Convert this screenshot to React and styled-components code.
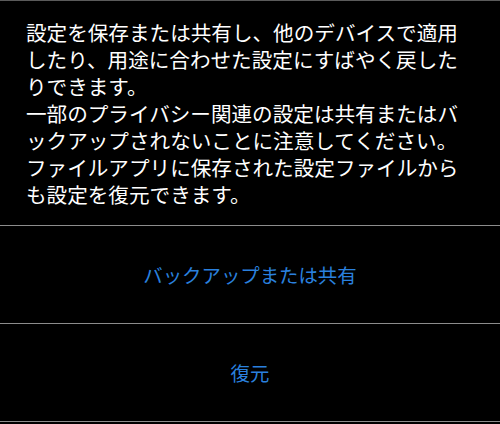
import React from 'react';
import styled, { createGlobalStyle } from 'styled-components';

const GlobalStyle = createGlobalStyle`
  html, body {
    margin: 0;
    padding: 0;
    background: #000;
  }
  body {
    font-family: "Noto Sans CJK JP", "Noto Sans", sans-serif;
  }
`;

const lines = [
  '設定を保存または共有し、他のデバイスで適用',
  'したり、用途に合わせた設定にすばやく戻した',
  'りできます。',
  '一部のプライバシー関連の設定は共有またはバ',
  'ックアップされないことに注意してください。',
  'ファイルアプリに保存された設定ファイルから',
  'も設定を復元できます。',
];

function App() {
  return (
    <>
      <GlobalStyle />
      <Sheet>
        <Message>
          {lines.map((line) => (
            <Line key={line}>{line}</Line>
          ))}
        </Message>
        <Action>バックアップまたは共有</Action>
        <Action>復元</Action>
      </Sheet>
    </>
  );
}

const Sheet = styled.div`
  width: 500px;
  height: 424px;
  background: #000;
  border-top: 1px solid #5a5a5a;
  box-sizing: border-box;
  display: flex;
  flex-direction: column;
  overflow: hidden;
`;

const Message = styled.div`
  padding: 18px 20px 17px 26px;
  color: #fff;
  font-size: 20.6px;
  line-height: 27px;
`;

const Line = styled.div`
  white-space: nowrap;
`;

const Action = styled.div`
  height: 97px;
  display: flex;
  align-items: center;
  justify-content: center;
  border-top: 1px solid #8c8c8c;
  color: #2a80de;
  font-size: 19.4px;

  &:last-of-type {
    border-bottom: 1px solid #8c8c8c;
  }
`;

export default App;
